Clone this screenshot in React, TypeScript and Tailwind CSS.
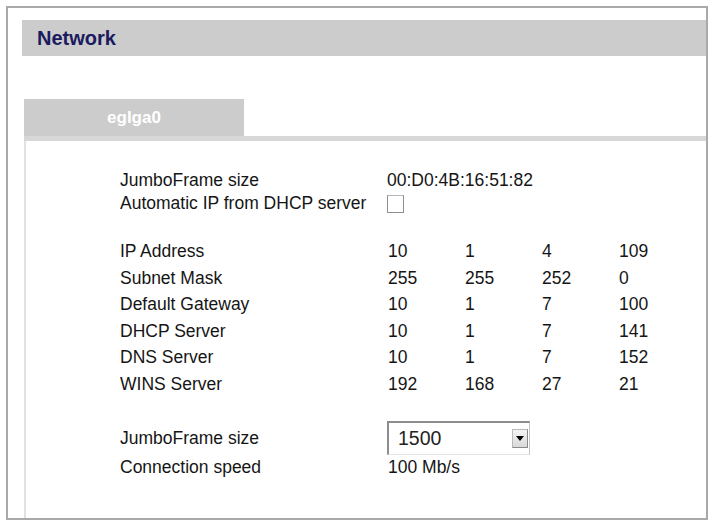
const rows: [string, string[]][] = [
  ["IP Address", ["10", "1", "4", "109"]],
  ["Subnet Mask", ["255", "255", "252", "0"]],
  ["Default Gateway", ["10", "1", "7", "100"]],
  ["DHCP Server", ["10", "1", "7", "141"]],
  ["DNS Server", ["10", "1", "7", "152"]],
  ["WINS Server", ["192", "168", "27", "21"]],
];

const App = () => {
  return (
    <div className="w-[709px] h-[520px] bg-white pt-[6px] pl-[6px] pr-px font-['Liberation_Sans',Arial,sans-serif] text-[#151515]">
      <div className="h-[514px] border-2 border-[#a9a9a9] flex flex-col">
        <div className="mt-3 ml-[14px] h-9 bg-[#cccccc] flex items-center pl-[15px] text-[20px] font-bold text-[#1b1a5f]">
          Network
        </div>

        <div className="mt-[43px] ml-4 flex-1 flex flex-col">
          <div className="w-[220px] h-[37px] bg-[#cccccc] flex items-center justify-center text-white font-bold text-[17px]">
            eglga0
          </div>
          <div className="h-[5px] bg-[#d7d7d7]" />

          <div className="flex-1 border-l-2 border-[#e1e1e1] pl-[94px] pt-[28px] text-[17.5px]">
            <div className="leading-[23px]">
              <div className="flex">
                <span className="w-[267px]">JumboFrame size</span>
                <span>00:D0:4B:16:51:82</span>
              </div>
              <div className="flex items-center">
                <span className="w-[267px]">Automatic IP from DHCP server</span>
                <span className="w-[17px] h-[18px] border border-[#8f8f8f] border-t-[#b5b5b5] bg-white" />
              </div>
            </div>

            <div className="mt-[23px] leading-[26.5px]">
              {rows.map(([label, parts]) => (
                <div key={label} className="flex">
                  <span className="w-[268px]">{label}</span>
                  {parts.map((p, i) => (
                    <span key={i} className="w-[77px]">{p}</span>
                  ))}
                </div>
              ))}
            </div>

            <div className="mt-[24px]">
              <div className="flex items-center h-[34px]">
                <span className="w-[267px]">JumboFrame size</span>
                <div className="w-[143px] h-[34px] border-t-2 border-l-2 border-[#8d8d8d] border-r border-b border-r-[#c4c4c4] border-b-[#e4e4e4] bg-white flex items-center justify-between pl-[9px] pr-[1px]">
                  <span className="text-[19.5px] text-[#222]">1500</span>
                  <span className="w-[16px] h-[19px] bg-gradient-to-b from-[#f4f4f4] to-[#d9d9d9] border border-[#b9b9b9] border-r-[#8a8a8a] border-b-[#8a8a8a] flex items-center justify-center">
                    <svg width="8" height="5" viewBox="0 0 8 5">
                      <path d="M0 0h8L4 5z" fill="#000" />
                    </svg>
                  </span>
                </div>
              </div>
              <div className="flex leading-[24px]">
                <span className="w-[268px]">Connection speed</span>
                <span>100 Mb/s</span>
              </div>
            </div>
          </div>
        </div>
      </div>
    </div>
  );
};

export default App;
